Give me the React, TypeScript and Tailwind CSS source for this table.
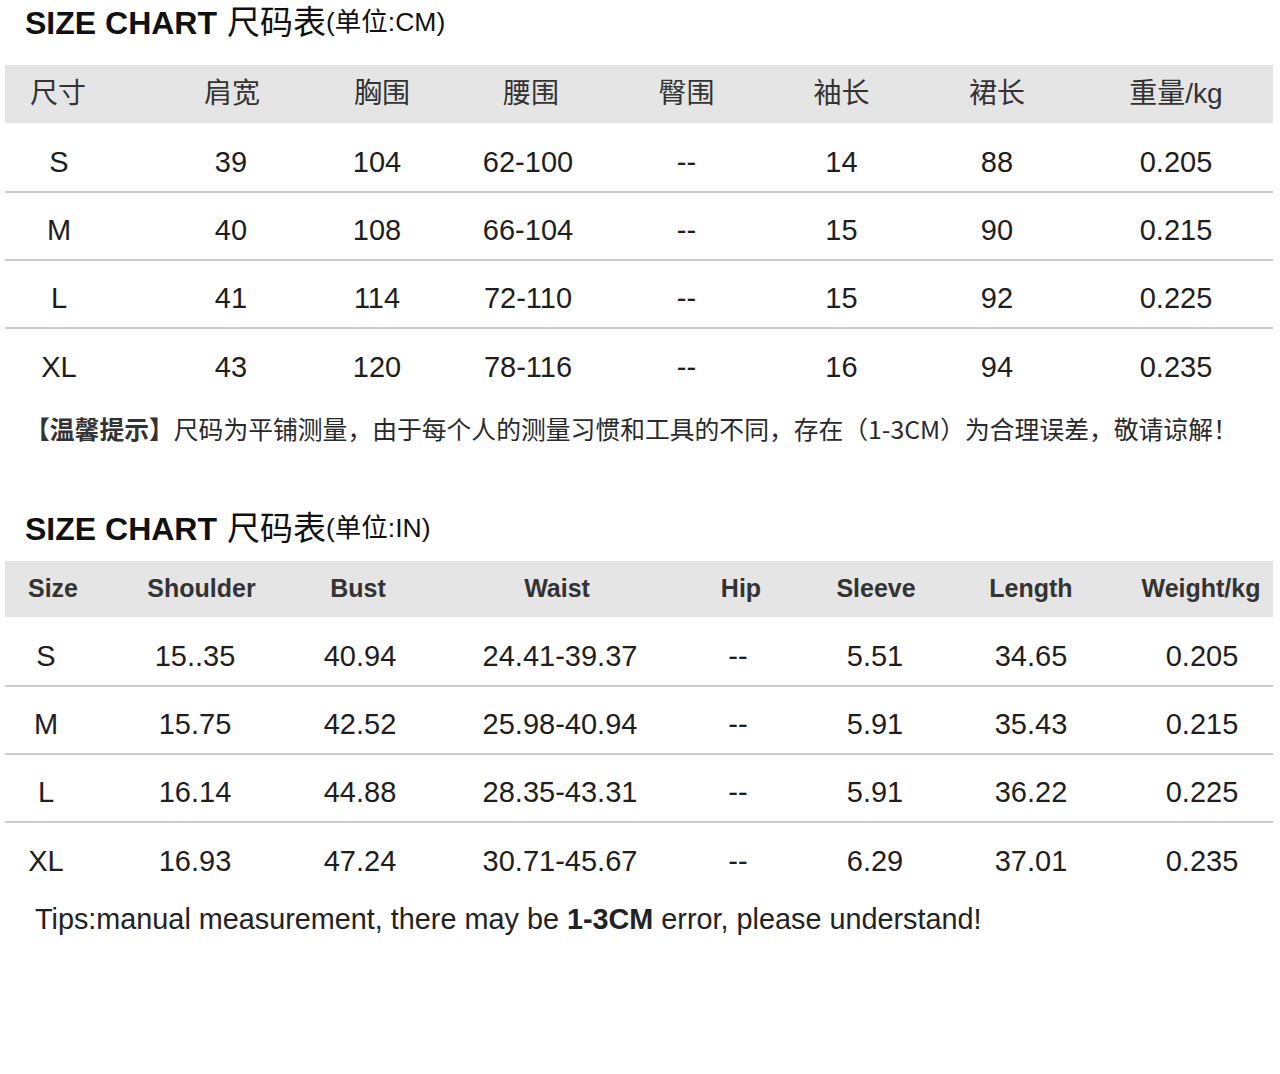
const cmHeader = ['尺寸', '肩宽', '胸围', '腰围', '臀围', '袖长', '裙长', '重量/kg'];
const cmRows = [
    ['S', '39', '104', '62-100', '--', '14', '88', '0.205'],
    ['M', '40', '108', '66-104', '--', '15', '90', '0.215'],
    ['L', '41', '114', '72-110', '--', '15', '92', '0.225'],
    ['XL', '43', '120', '78-116', '--', '16', '94', '0.235'],
];

const inHeader = ['Size', 'Shoulder', 'Bust', 'Waist', 'Hip', 'Sleeve', 'Length', 'Weight/kg'];
const inRows = [
    ['S', '15..35', '40.94', '24.41-39.37', '--', '5.51', '34.65', '0.205'],
    ['M', '15.75', '42.52', '25.98-40.94', '--', '5.91', '35.43', '0.215'],
    ['L', '16.14', '44.88', '28.35-43.31', '--', '5.91', '36.22', '0.225'],
    ['XL', '16.93', '47.24', '30.71-45.67', '--', '6.29', '37.01', '0.235'],
];

// column widths + small nudges so each text sits where the chart puts it
const cmGrid = 'grid-cols-[140px_161px_149px_154px_155px_155px_168px_186px]';
const cmHeadPad = ['pr-[34px]', 'pl-[13px]', 'pl-[3px]', 'pr-[2px]', '', '', 'pr-[12px]', 'pr-[8px]'];
const cmCellPad = ['pr-[32px]', 'pl-[11px]', 'pr-[7px]', 'pr-[8px]', '', '', 'pr-[12px]', 'pr-[8px]'];

const inGrid = 'grid-cols-[119px_155px_180px_191px_158px_146px_162px_157px]';
const inHeadPad = ['pr-[23px]', '', 'pr-[22px]', 'pl-[5px]', 'pl-[24px]', 'pr-[10px]', 'pr-[8px]', 'pl-[13px]'];
const inCellPad = ['pr-[37px]', 'pr-[13px]', 'pr-[18px]', 'pl-[11px]', 'pl-[18px]', 'pr-[12px]', 'pr-[8px]', 'pl-[15px]'];

const font = "font-['Liberation_Sans','Noto_Sans_CJK_SC',sans-serif]";

interface TableProps {
    grid: string;
    header: string[];
    rows: string[][];
    headPad: string[];
    cellPad: string[];
    headHeight: string;
    headText: string;
}

function SizeTable({ grid, header, rows, headPad, cellPad, headHeight, headText }: TableProps) {
    return (
        <div className="ml-[5px] w-[1268px]">
            <div className={`grid ${grid} ${headHeight} bg-[#e5e5e5]`}>
                {header.map((h, i) => (
                    <div key={h} className={`flex items-center justify-center ${headText} text-[#333] ${headPad[i]}`}>
                        {h}
                    </div>
                ))}
            </div>
            <div className="pt-[2px]">
                {rows.map((row, r) => (
                    <div
                        key={row[0]}
                        className={`grid ${grid} h-[68px] pt-[10px] ${r < rows.length - 1 ? 'border-b-2 border-[#cdcdcd]' : ''}`}
                    >
                        {row.map((v, i) => (
                            <div key={i} className={`flex items-center justify-center text-[29px] text-[#1e1e1e] ${cellPad[i]}`}>
                                {v}
                            </div>
                        ))}
                    </div>
                ))}
            </div>
        </div>
    );
}

function Title({ unit }: { unit: string }) {
    return (
        <div className="flex h-[45px] items-center pl-[25px] text-[#111]">
            <span className="text-[32px] font-bold">SIZE CHART</span>
            <span className="ml-[10px] text-[33px]">尺码表</span>
            <span className="text-[26.5px]">(单位:{unit})</span>
        </div>
    );
}

export default function App() {
    return (
        <div className={`w-[1280px] h-[1074px] bg-white ${font}`}>
            {/* 厘米 */}
            <Title unit="CM" />
            <div className="mt-[20px]">
                <SizeTable
                    grid={cmGrid}
                    header={cmHeader}
                    rows={cmRows}
                    headPad={cmHeadPad}
                    cellPad={cmCellPad}
                    headHeight="h-[58px]"
                    headText="text-[28px]"
                />
            </div>
            <div className="flex h-[64px] items-center pl-[25px] text-[24.8px] text-[#2a2a2a] font-['Noto_Sans_CJK_SC',sans-serif]">
                <span className="font-bold text-[#333]">【温馨提示】</span>
                <span>尺码为平铺测量，由于每个人的测量习惯和工具的不同，存在（1-3CM）为合理误差，敬请谅解！</span>
            </div>

            {/* 英寸 */}
            <div className="mt-[45px]">
                <Title unit="IN" />
            </div>
            <div className="mt-[10px]">
                <SizeTable
                    grid={inGrid}
                    header={inHeader}
                    rows={inRows}
                    headPad={inHeadPad}
                    cellPad={inCellPad}
                    headHeight="h-[56px]"
                    headText="text-[25px] font-bold"
                />
            </div>
            <div className="flex h-[58px] items-center pl-[35px] text-[28.8px] text-[#222]">
                <span>
                    Tips:manual measurement, there may be <b>1-3CM</b> error, please understand!
                </span>
            </div>
        </div>
    );
}
